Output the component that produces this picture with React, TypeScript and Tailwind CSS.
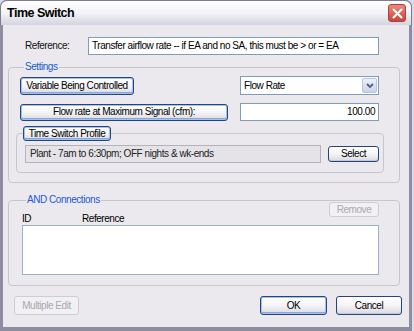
import React from "react";

const font = { fontFamily: '"Liberation Sans", Arial, sans-serif' };

function Btn({
  children,
  className = "",
  hot = false,
  disabled = false,
}: {
  children: React.ReactNode;
  className?: string;
  hot?: boolean;
  disabled?: boolean;
}) {
  if (disabled) {
    return (
      <div
        className={`flex items-center justify-center rounded-[3px] border border-[#cfcdd4] bg-[#f1f0f2] text-[#a9a7b0] ${className}`}
      >
        {children}
      </div>
    );
  }
  return (
    <div
      className={`flex items-center justify-center rounded-[3px] border border-[#24457f] bg-gradient-to-b from-[#ffffff] via-[#f4f4f7] to-[#d9d9e2] text-black ${
        hot ? "shadow-[inset_0_0_0_1px_#a6c1ea,inset_0_-1px_0_1px_#86a6dc]" : "shadow-[inset_0_-1px_0_0_#c8c8d4]"
      } ${className}`}
    >
      {children}
    </div>
  );
}

export default function App() {
  return (
    <div className="w-[414px] h-[331px] bg-[#dcdce4] text-[10px] tracking-[-0.45px] leading-none text-black whitespace-nowrap" style={font}>
      <div className="w-[412px] h-[331px] flex flex-col rounded-t-[7px] bg-[#8d8ca0] px-[3px] pb-[4px]">
        {/* Title bar */}
        <div className="h-[25px] -mx-[3px] flex items-center justify-between rounded-t-[7px] border border-b-0 border-[#7c7b90] bg-gradient-to-b from-[#ffffff] via-[#f3f3f7] to-[#d4d3e0] pl-[6px] pr-[5px]">
          <span className="text-[12.5px] tracking-[-0.5px] font-bold text-black">Time Switch</span>
          <div className="w-[18px] h-[18px] rounded-[3px] border border-[#a8423a] bg-gradient-to-b from-[#ea8a7e] to-[#c9453a] flex items-center justify-center">
            <svg width="11" height="11" viewBox="0 0 11 11">
              <path d="M1.5 1.5 L9.5 9.5 M9.5 1.5 L1.5 9.5" stroke="white" strokeWidth="2" strokeLinecap="round" />
            </svg>
          </div>
        </div>
        {/* Body */}
        <div className="flex-1 bg-[#ebe9ee] flex flex-col pt-[12px] px-[5px]">
          {/* Reference row */}
          <div className="flex items-center h-[18px]">
            <span className="w-[80px] pl-[17px] text-[#111]">Reference:</span>
            <div className="w-[291px] h-[18px] border border-[#7f9db9] bg-white flex items-center pl-[3px]">
              Transfer airflow rate -- if EA and no SA, this must be &gt; or = EA
            </div>
          </div>

          {/* Settings */}
          <fieldset className="min-w-0 mt-[7px] w-[392px] h-[121px] border border-[#c8c6cd] rounded-[4px] pl-[11px] pr-[20px] pt-[4px]">
            <legend className="ml-[4px] px-[1px] text-[#2159d6]">Settings</legend>
            <div className="flex justify-between items-center">
              <Btn hot className="w-[114px] h-[18px]">Variable Being Controlled</Btn>
              <div className="w-[139px] h-[19px] border border-[#7f9db9] bg-white flex items-center justify-between pl-[3px] pr-[1px]">
                <span>Flow Rate</span>
                <div className="w-[15px] h-[15px] rounded-[2px] border border-[#b6c3dc] bg-gradient-to-b from-[#eef1f8] to-[#c9d2e6] flex items-center justify-center">
                  <svg width="8" height="6" viewBox="0 0 8 6">
                    <path d="M1 1 L4 4 L7 1" stroke="#4d6185" strokeWidth="1.8" fill="none" />
                  </svg>
                </div>
              </div>
            </div>
            <div className="flex justify-between items-center mt-[8px]">
              <Btn hot className="w-[208px] h-[17px]">Flow rate at Maximum Signal (cfm):</Btn>
              <div className="w-[139px] h-[18px] border border-[#7f9db9] bg-white flex items-center justify-end pr-[3px]">
                100.00
              </div>
            </div>
            <fieldset className="min-w-0 mt-[5px] -ml-[4px] w-[368px] h-[47px] border border-[#c8c6cd] rounded-[4px] pl-[8px] pr-[4px]">
              <legend className="-ml-[2px]">
                <Btn hot className="w-[88px] h-[15px]">Time Switch Profile</Btn>
              </legend>
              <div className="flex items-center justify-between mt-[4px]">
                <div className="w-[296px] h-[18px] border border-[#b4b2ba] bg-[#e5e3e8] flex items-center pl-[4px] text-[#222]">
                  Plant - 7am to 6:30pm; OFF nights &amp; wk-ends
                </div>
                <Btn className="w-[51px] h-[16px]">Select</Btn>
              </div>
            </fieldset>
          </fieldset>

          {/* AND Connections */}
          <fieldset className="min-w-0 mt-[12px] w-[392px] h-[91px] border border-[#c8c6cd] rounded-[4px] pl-[13px] pr-[20px]">
            <legend className="ml-[4px] px-[1px] text-[#2159d6]">AND Connections</legend>
            <div className="flex items-start justify-between h-[17px]">
              <div className="flex pt-[9px]">
                <span className="w-[60px]">ID</span>
                <span>Reference</span>
              </div>
              <Btn disabled className="w-[50px] h-[15px] -mt-[3px]">Remove</Btn>
            </div>
            <div className="mt-[3px] w-[357px] h-[50px] border border-[#9cb0c8] bg-white" />
          </fieldset>

          {/* Bottom buttons */}
          <div className="mt-[10px] flex items-center justify-between pl-[6px] pr-[2px]">
            <Btn disabled className="w-[65px] h-[19px]">Multiple Edit</Btn>
            <div className="flex gap-[9px]">
              <Btn hot className="w-[67px] h-[19px]">OK</Btn>
              <Btn className="w-[66px] h-[19px]">Cancel</Btn>
            </div>
          </div>
        </div>
      </div>
    </div>
  );
}
